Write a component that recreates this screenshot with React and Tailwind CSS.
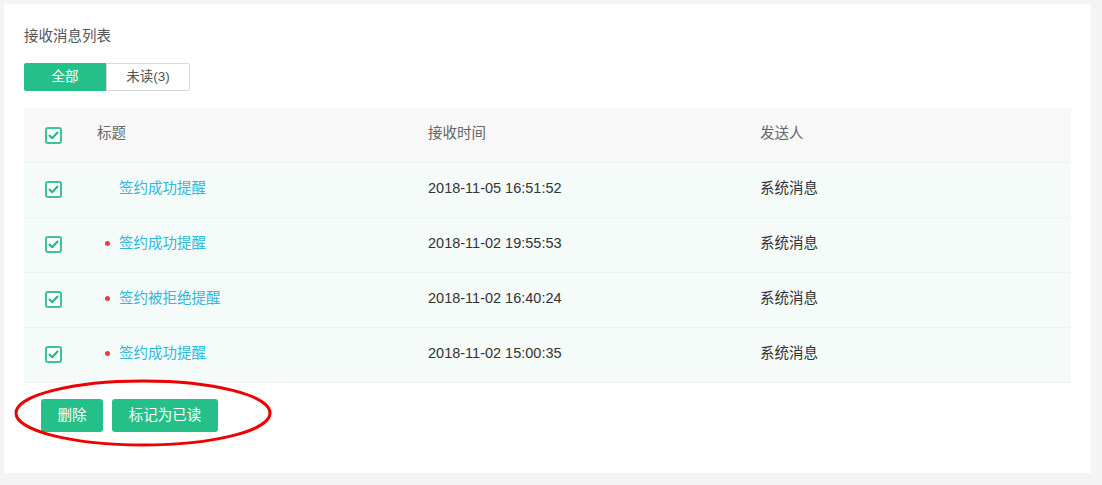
import React from 'react';

const rows = [
  { title: '签约成功提醒', time: '2018-11-05 16:51:52', from: '系统消息', unread: false },
  { title: '签约成功提醒', time: '2018-11-02 19:55:53', from: '系统消息', unread: true },
  { title: '签约被拒绝提醒', time: '2018-11-02 16:40:24', from: '系统消息', unread: true },
  { title: '签约成功提醒', time: '2018-11-02 15:00:35', from: '系统消息', unread: true },
];

const Check = () => (
  <span className="flex items-center justify-center w-[17px] h-[17px] rounded-[3px] border-2 border-[#3cc496] bg-white">
    <svg width="11" height="9" viewBox="0 0 11 9" fill="none">
      <path d="M1.5 4.5 L4.2 7.2 L9.5 1.5" stroke="#22b582" strokeWidth="2" strokeLinecap="round" strokeLinejoin="round" />
    </svg>
  </span>
);

export default function App() {
  return (
    <div className="w-[1102px] h-[485px] bg-[#f4f4f4] pt-[4px] pl-[4px] font-['Liberation_Sans','Noto_Sans_CJK_SC',sans-serif]">
      <div className="relative w-[1087px] h-[469px] bg-white px-[20px] pt-[22px]">
        <div className="text-[14.5px] leading-[20px] text-[#555]">接收消息列表</div>

        <div className="flex mt-[17px] w-[166px] h-[28px] text-[13.5px]">
          <div className="flex-1 flex items-center justify-center bg-[#25c08a] text-white rounded-l-[2px]">全部</div>
          <div className="flex-1 flex items-center justify-center border border-[#d9d9d9] text-[#555] rounded-r-[2px]">未读(3)</div>
        </div>

        <div className="mt-[17px] w-[1047px] text-[14.5px]">
          <div className="flex items-center h-[54px] pb-[2px] bg-[#f8f8f8] text-[#666]">
            <div className="w-[73px] pl-[21px] pt-[2px]"><Check /></div>
            <div className="w-[331px]">标题</div>
            <div className="w-[332px]">接收时间</div>
            <div className="flex-1">发送人</div>
          </div>
          {rows.map((r, i) => (
            <div key={i} className="flex items-center h-[55px] pb-[3px] bg-[#f5fbf9] border-t border-[#eef2f0] text-[#333]">
              <div className="w-[73px] pl-[21px] pt-[2px]"><Check /></div>
              <div className="w-[331px] flex items-center">
                <span className={`w-[5px] h-[5px] rounded-full mr-[9px] ml-[8px] ${r.unread ? 'bg-[#f03a3a]' : 'bg-transparent'}`} />
                <span className="text-[#2fb8dc]">{r.title}</span>
              </div>
              <div className="w-[332px]">{r.time}</div>
              <div className="flex-1">{r.from}</div>
            </div>
          ))}
          <div className="h-px bg-[#eef2f0]" />
        </div>

        <div className="flex gap-[9px] mt-[16px] pl-[17px] text-[14.5px]">
          <button className="w-[62px] h-[33px] rounded-[3px] bg-[#25c08a] text-white">删除</button>
          <button className="w-[106px] h-[33px] rounded-[3px] bg-[#25c08a] text-white">标记为已读</button>
        </div>

        <svg className="absolute left-[9px] top-[374px] pointer-events-none" width="262" height="72" viewBox="0 0 262 72">
          <ellipse cx="130" cy="35" rx="127" ry="32" fill="none" stroke="#ee0000" strokeWidth="3" />
        </svg>
      </div>
    </div>
  );
}
